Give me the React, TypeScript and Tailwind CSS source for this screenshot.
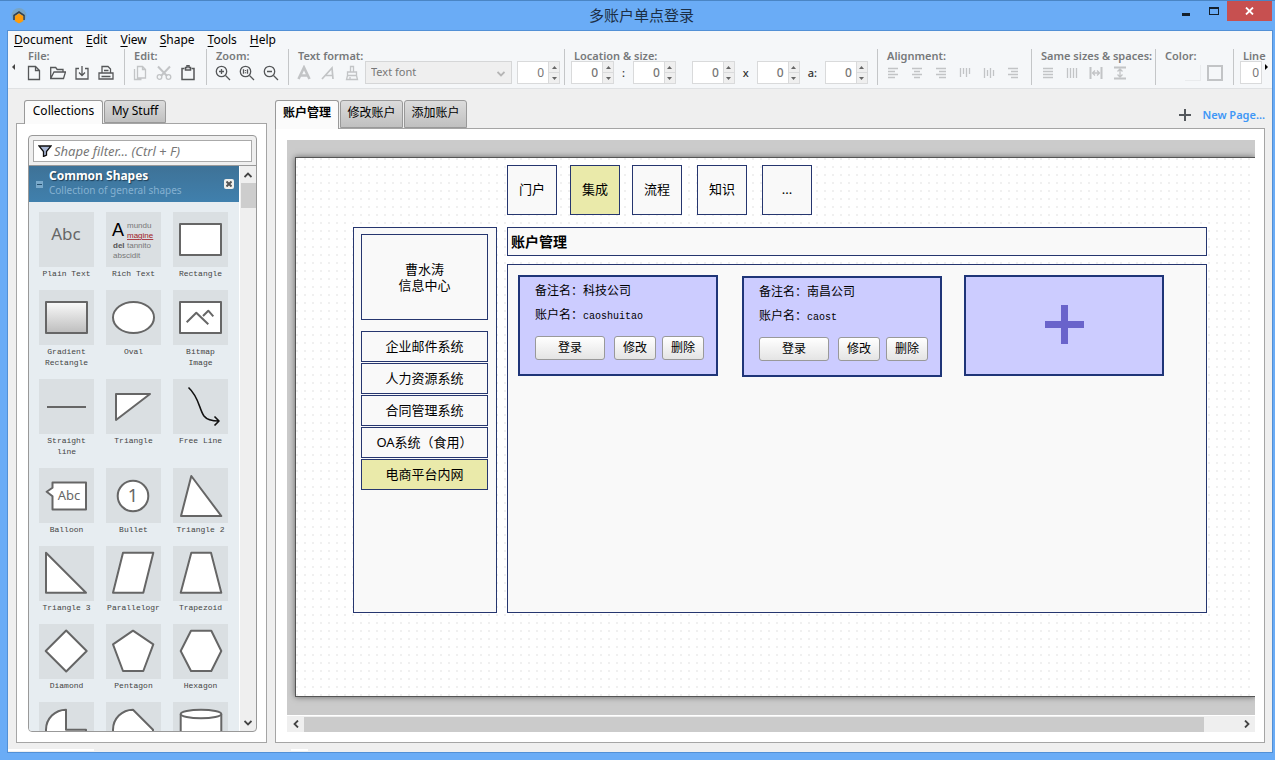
import type { ReactNode } from "react";
import clsx from "clsx";

const menus = ["Document", "Edit", "View", "Shape", "Tools", "Help"];

const pages = ["账户管理", "修改账户", "添加账户"];

const systems = ["企业邮件系统", "人力资源系统", "合同管理系统", "OA系统（食用）", "电商平台内网"];

const Icon = ({ children, size = 16 }: { children: ReactNode; size?: number }) => (
  <svg
    width={size}
    height={size}
    viewBox={`0 0 ${size} ${size}`}
    fill="none"
    stroke="currentColor"
    strokeWidth="1.3"
    aria-hidden="true"
  >
    {children}
  </svg>
);

const ToolButton = ({ label, off, children }: { label: string; off?: boolean; children: ReactNode }) => (
  <button
    type="button"
    aria-label={label}
    className={clsx("flex h-6 w-6 items-center justify-center", off ? "text-[#c2c4c6]" : "text-[#555759]")}
  >
    <Icon>{children}</Icon>
  </button>
);

const Group = ({ title, className, children }: { title: string; className: string; children: ReactNode }) => (
  <section className={clsx("h-9 shrink-0 border-l border-[#c4c6c8]", className)}>
    <h2 className="h-3 pl-[9px] text-[11px] leading-[14px] font-semibold whitespace-nowrap text-[#77797b]">
      {title}
    </h2>
    <div className="flex h-[23px] items-center">{children}</div>
  </section>
);

const Spin = ({ label }: { label: string }) => (
  <div className="flex h-[23px] shrink-0 border border-[#d9dadb] bg-white">
    <input
      type="text"
      aria-label={label}
      defaultValue="0"
      className="w-[30px] bg-transparent pr-1 text-right text-[12px] text-[#777] outline-none"
    />
    <div className="flex w-[11px] flex-col border-l border-[#d9dadb] bg-[#efefef] text-[#666]">
      <button type="button" aria-label={`${label} up`} className="flex flex-1 items-center justify-center border-b border-[#d9dadb]">
        <svg width="5" height="3" viewBox="0 0 5 3" fill="currentColor"><path d="M2.5 0 5 3H0z" /></svg>
      </button>
      <button type="button" aria-label={`${label} down`} className="flex flex-1 items-center justify-center">
        <svg width="5" height="3" viewBox="0 0 5 3" fill="currentColor"><path d="M0 0h5L2.5 3z" /></svg>
      </button>
    </div>
  </div>
);

const TitleBar = () => (
  <header className="flex h-[30px] shrink-0 items-start pl-[3px]">
    <div className="flex w-[100px] pt-[7px]">
      <svg width="16" height="16" viewBox="0 0 16 16" aria-hidden="true">
        <circle cx="8" cy="7.5" r="7.5" fill="#78a5c6" />
        <path d="M3 12V7.5L8 4l5 3.5V12" fill="none" stroke="#35424d" strokeWidth="1.6" />
        <path d="M8 5.5 12.2 8v5L8 15.5 4 13V8z" fill="#ff9c0a" />
      </svg>
    </div>
    <h1 className="flex-1 pt-[3px] text-center text-[15px] leading-[22px] text-[#1c2f45]">多账户单点登录</h1>
    <div className="flex w-[100px] items-start justify-end text-[#14202c]">
      <button type="button" aria-label="Minimize" className="flex h-5 w-[27px] items-center justify-center">
        <svg width="9" height="12" viewBox="0 0 9 12"><path d="M0 8h8v3H0z" fill="currentColor" /></svg>
      </button>
      <button type="button" aria-label="Maximize" className="flex h-5 w-[27px] items-center justify-center">
        <svg width="10" height="8" viewBox="0 0 10 8"><path d="M0 0h10v8H0zM1 2v5h8V2z" fill="currentColor" fillRule="evenodd" /></svg>
      </button>
      <button type="button" aria-label="Close" className="flex h-5 w-[45px] items-center justify-center bg-[#c75050] text-white">
        <svg width="9" height="8" viewBox="0 0 9 8" stroke="currentColor" strokeWidth="1.8"><path d="m1 .5 7 7M8 .5l-7 7" /></svg>
      </button>
    </div>
  </header>
);

const MenuBar = () => (
  <nav className="flex h-[17px] shrink-0 gap-[13px] bg-[#f5f7f9] pl-[6px] text-[12px] leading-[18px] text-black">
    {menus.map((name) => (
      <button key={name} type="button">
        <span className="underline underline-offset-2">{name[0]}</span>
        {name.slice(1)}
      </button>
    ))}
  </nav>
);

const ToolBar = () => (
  <div className="flex h-[41px] shrink-0 overflow-hidden border-b border-[#dfe1e3] bg-[#f5f7f9] pt-px">
    <div className="flex w-[10px] items-center justify-center pb-1 text-[#444]">
      <svg width="3" height="6" viewBox="0 0 3 6" fill="currentColor"><path d="M3 0v6L0 3z" /></svg>
    </div>
    <Group title="File:" className="w-[106px] border-transparent">
      <div className="flex pl-[3px]">
        <ToolButton label="New">
          <path d="M2.5 1.5h7l4 4v9h-11zM9.5 1.5v4h4" />
        </ToolButton>
        <ToolButton label="Open">
          <path d="M.7 13.5v-11h5l1.500 2H13v2.500M.7 13.500 4 7h11.500l-2 6.500z" />
        </ToolButton>
        <ToolButton label="Save">
          <path d="M5 3.500H2v10.500h12V3.500h-3M8 1v9M5 7.500 8 10.500l3-3" />
        </ToolButton>
        <ToolButton label="Print">
          <path d="M4 8V1.500h6l2.500 2.500v4M1 8h14v6H1zM3.500 11.500h9M6 5.500h4.500" />
        </ToolButton>
      </div>
    </Group>
    <Group title="Edit:" className="w-[82px]">
      <div className="flex pl-[3px]">
        <ToolButton label="Copy" off>
          <path d="M2.500 4v10.500h7M5.500 1.500h5l3 3v8.500h-8zM10.500 1.500v3h3" />
        </ToolButton>
        <ToolButton label="Cut" off>
          <path d="M2 1.500 11 11M14 1.500 5 11" strokeWidth="2" />
          <circle cx="3.500" cy="12" r="2.300" />
          <circle cx="12.500" cy="12" r="2.300" />
        </ToolButton>
        <ToolButton label="Paste">
          <path d="M4.500 3.500H2v11h12v-11h-2.500" strokeWidth="1.500" />
          <path d="M5.500 5V2.500h1.500V.8h2v1.700h1.500V5z" strokeWidth="1.500" />
        </ToolButton>
      </div>
    </Group>
    <Group title="Zoom:" className="w-[82px]">
      <div className="flex pl-1">
        <ToolButton label="Zoom in">
          <circle cx="6.500" cy="6.500" r="5.200" />
          <path d="m10.500 10.500 4.500 4.500M4 6.500h5M6.500 4v5" />
        </ToolButton>
        <ToolButton label="Actual size">
          <circle cx="6.500" cy="6.500" r="5.200" />
          <path d="m10.500 10.500 4.500 4.500M4.500 4.200v4.600M8.500 4.200v4.600M6.500 5v1M6.500 7.200v1" />
        </ToolButton>
        <ToolButton label="Zoom out">
          <circle cx="6.500" cy="6.500" r="5.200" />
          <path d="m10.500 10.500 4.500 4.500M4 6.500h5" />
        </ToolButton>
      </div>
    </Group>
    <Group title="Text format:" className="w-[276px]">
      <div className="flex pl-[3px]">
        <ToolButton label="Bold" off>
          <path d="M2.500 14 8 2.500 13.500 14M4.500 10.500h7" strokeWidth="2.600" />
        </ToolButton>
        <ToolButton label="Italic" off>
          <path d="M2 14 12 3l1 11M5.500 10.500h7" strokeWidth="1.700" />
        </ToolButton>
        <ToolButton label="Format brush" off>
          <path d="M6.500 7V1.500h3V7M3.500 7h9v3.500h-9zM3.500 10.500l-1 4h11l-1-4M6 12v2" />
        </ToolButton>
      </div>
      <div className="relative ml-px">
        <select
          aria-label="Text font"
          className="block h-[23px] w-[147px] appearance-none border border-[#d5d6d7] bg-[#efefef] pl-[5px] text-[11px] text-[#777] outline-none"
        >
          <option>Text font</option>
        </select>
        <svg className="pointer-events-none absolute top-[10px] right-[7px] text-[#b5b5b5]" width="8" height="6" viewBox="0 0 8 6" fill="none" stroke="currentColor" strokeWidth="1.800">
          <path d="m.5 1 3.500 3.500L7.500 1" />
        </svg>
      </div>
      <div className="ml-[5px] flex"><Spin label="Font size" /></div>
    </Group>
    <Group title="Location &amp; size:" className="w-[313px]">
      <div className="flex w-full items-center justify-between pr-[9px] pl-[6px] text-[11px] leading-none font-medium text-[#333]">
        <Spin label="X" />
        <span>:</span>
        <Spin label="Y" />
        <span />
        <Spin label="Width" />
        <span>x</span>
        <Spin label="Height" />
        <span>a:</span>
        <Spin label="Angle" />
      </div>
    </Group>
    <Group title="Alignment:" className="w-[154px]">
      <div className="flex pl-[3px]">
        <ToolButton label="Align left" off><path d="M3 3.500h10M3 6.500h7M3 9.500h10M3 12.500h7" /></ToolButton>
        <ToolButton label="Align center" off><path d="M3 3.500h10M5 6.500h6M3 9.500h10M5 12.500h6" /></ToolButton>
        <ToolButton label="Align right" off><path d="M3 3.500h10M6 6.500h7M3 9.500h10M6 12.500h7" /></ToolButton>
        <ToolButton label="Align top" off><path d="M3.500 3v9M6.500 3v6M9.500 3v9M12.500 3v6" /></ToolButton>
        <ToolButton label="Align middle" off><path d="M3.500 3v10M6.500 5v6M9.500 3v10M12.500 5v6" /></ToolButton>
        <ToolButton label="Align bottom" off><path d="M3 3.500h10M6 6.500h7M3 9.500h10M6 12.500h7" /></ToolButton>
      </div>
    </Group>
    <Group title="Same sizes &amp; spaces:" className="w-[124px]">
      <div className="flex pl-1">
        <ToolButton label="Same width" off><path d="M3 3.500h10M3 6.500h10M3 9.500h10M3 12.500h10" /></ToolButton>
        <ToolButton label="Same height" off><path d="M3.500 3v10M6.500 3v10M9.500 3v10M12.500 3v10" /></ToolButton>
        <ToolButton label="Same horizontal space" off>
          <path d="M2.500 2v12M13.500 2v12" strokeWidth="2" />
          <path d="M4.500 8h7M7 5.500 4.500 8 7 10.500M9 5.500 11.500 8 9 10.500" />
        </ToolButton>
        <ToolButton label="Same vertical space" off>
          <path d="M2 2.500h12M2 13.500h12" strokeWidth="2" />
          <path d="M8 4.500v7M5.500 6.500 8 4l2.500 2.500M5.500 9.500 8 12l2.500-2.500" />
        </ToolButton>
      </div>
    </Group>
    <Group title="Color:" className="w-[78px]">
      <button type="button" aria-label="Fill color" className="ml-[29px] h-4 w-4 border-r border-b border-[#e9ebed]" />
      <button type="button" aria-label="Line color" className="ml-[6px] h-4 w-4 border-2 border-[#c2c4c6]" />
    </Group>
    <Group title="Line" className="w-[31px]">
      <input
        type="text"
        aria-label="Line width"
        defaultValue="0"
        className="ml-[6px] h-[23px] w-[22px] shrink-0 border border-[#d9dadb] bg-white pr-[2px] text-right text-[12px] text-[#777] outline-none"
      />
    </Group>
    <div className="flex items-center pb-1 pl-px text-black">
      <svg width="3" height="6" viewBox="0 0 3 6" fill="currentColor"><path d="M0 0v6l3-3z" /></svg>
    </div>
  </div>
);

type Shape = { name: string; art: ReactNode };

const shapes: Shape[] = [
  {
    name: "Plain Text",
    art: <text x="27" y="28" textAnchor="middle" fontSize="17" fill="#666" stroke="none">Abc</text>,
  },
  {
    name: "Rich Text",
    art: (
      <g className="font-['Liberation_Sans',sans-serif]" fontSize="8" fill="#777" stroke="none">
        <text x="6" y="24" fontSize="18" fill="#000">A</text>
        <text x="21" y="16">mundu</text>
        <text x="21" y="26" fill="#a01822" textDecoration="underline">magine</text>
        <text x="7" y="36" fontWeight="700" fill="#555">del</text>
        <text x="21" y="36">tannito</text>
        <text x="7" y="46">abscidit</text>
      </g>
    ),
  },
  { name: "Rectangle", art: <rect x="7" y="12" width="41" height="31" /> },
  {
    name: "Gradient Rectangle",
    art: (
      <>
        <linearGradient id="fade" x2="0" y2="1">
          <stop stopColor="#fafafa" />
          <stop offset="1" stopColor="#bdbdbd" />
        </linearGradient>
        <rect x="7" y="12" width="41" height="31" fill="url(#fade)" />
      </>
    ),
  },
  { name: "Oval", art: <ellipse cx="27.500" cy="27.500" rx="20.500" ry="15.500" /> },
  {
    name: "Bitmap Image",
    art: (
      <>
        <rect x="7" y="12" width="41" height="31" />
        <path d="m13.700 32.300 9.600-9.600 12 11.600M30 26l5.300-5.300 5 5.600" fill="none" />
      </>
    ),
  },
  { name: "Straight line", art: <path d="M8 28h39" /> },
  { name: "Triangle", art: <path d="M10 15h34L10 41z" /> },
  {
    name: "Free Line",
    art: (
      <path
        d="M15.500 8.500C26 18 26 30 31 37c3 4 8 5 15 5M41.500 37.500 46 42l-4.500 4.500"
        fill="none"
        stroke="#111"
        strokeWidth="1.600"
      />
    ),
  },
  {
    name: "Balloon",
    art: (
      <>
        <path d="M13.500 14.500H47v27H13.500V28.300L7.700 23.700l5.800-4z" />
        <text x="30" y="32" textAnchor="middle" fontSize="13" fill="#666" stroke="none">Abc</text>
      </>
    ),
  },
  {
    name: "Bullet",
    art: (
      <>
        <circle cx="27" cy="28" r="15.300" />
        <text x="27" y="34" textAnchor="middle" fontSize="18" fill="#666" stroke="none">1</text>
      </>
    ),
  },
  { name: "Triangle 2", art: <path d="m18.300 8 30 40H8z" /> },
  { name: "Triangle 3", art: <path d="m7 6.700 40 40H7z" /> },
  { name: "Parallelogr", art: <path d="M17 6.700h30.300l-10 40H7z" /> },
  { name: "Trapezoid", art: <path d="M18.300 6.700H38l10.300 40H7.700z" /> },
  { name: "Diamond", art: <path d="m27.200 6.500 20.500 20.500-20.500 20.500L6.700 27z" /> },
  { name: "Pentagon", art: <path d="m27 6.700 20.300 13.600L37.300 47H17L7 20.300z" /> },
  { name: "Hexagon", art: <path d="M18 6.700h20.300L48.300 27l-10 20H18L7.700 27z" /> },
  { name: "", art: <path d="M27 7.700v20h20a20 20 0 1 1-20-20z" /> },
  { name: "", art: <path d="M27 7.700a20 20 0 1 0 20 20z" /> },
  {
    name: "",
    art: (
      <>
        <path d="M7.700 12v34h40.600V12" />
        <ellipse cx="28" cy="12" rx="20.300" ry="4.300" />
      </>
    ),
  },
];

const ShapeTile = ({ name, art }: Shape) => (
  <li>
    <svg
      className="block bg-[#dadfe2]"
      width="55"
      height="55"
      viewBox="0 0 55 55"
      fill="#fff"
      stroke="#666"
      strokeWidth="2"
      strokeLinejoin="round"
    >
      {art}
    </svg>
    <p className="mt-px overflow-hidden text-center font-['Liberation_Mono',monospace] text-[8px] leading-[11px] text-[#444]">
      {name}
    </p>
  </li>
);

const Tab = ({ active, className, children }: { active?: boolean; className?: string; children: ReactNode }) => (
  <button
    type="button"
    className={clsx(
      "rounded-t-[3px] border border-[#999]",
      active ? "border-b-0 bg-[#fbfbfb]" : "bg-linear-to-b from-[#dcdcdc] to-[#c0c0c0]",
      className,
    )}
  >
    {children}
  </button>
);

const Library = () => (
  <aside className="flex w-[251px] shrink-0 flex-col">
    <div className="z-10 -mb-px flex h-6 gap-px pl-2 text-[12px] leading-5 text-black">
      <Tab active className="w-[79px] pb-[3px]">Collections</Tab>
      <Tab className="mb-px w-[62px] pb-[2px]">My Stuff</Tab>
    </div>
    <div className="flex min-h-0 flex-1 flex-col border border-[#a5a5a5] bg-white p-[11px] pr-[9px] pb-[10px]">
      <div className="flex min-h-0 flex-1 flex-col overflow-hidden rounded-[4px] border border-[#999] bg-[#efefef]">
        <div className="border-b border-[#999] p-1 pb-[3px]">
          <label className="flex h-[22px] items-center border border-[#aaa] bg-white pl-1">
            <svg width="14" height="12" viewBox="0 0 14 12" aria-hidden="true">
              <path d="M1 1h12L8.500 6.500v3.500l-3 1.500v-5z" fill="#a8b6d4" stroke="#111" strokeWidth="1.300" />
            </svg>
            <input
              type="text"
              aria-label="Shape filter"
              placeholder="Shape filter... (Ctrl + F)"
              className="ml-[2px] h-5 min-w-0 flex-1 pb-px text-[13px] italic outline-none placeholder:text-[#777]"
            />
          </label>
        </div>
        <div className="flex min-h-0 flex-1">
          <div className="flex min-w-0 flex-1 flex-col overflow-hidden bg-[#e7edf1]">
            <div className="flex h-9 shrink-0 items-center bg-linear-to-b from-[#3e7297] to-[#4080ad] pr-[5px] pl-[7px]">
              <button type="button" aria-label="Collapse" className="flex h-[7px] w-[7px] items-center justify-center bg-[#79a9cb]">
                <span className="h-px w-[5px] bg-[#24506f]" />
              </button>
              <div className="ml-[6px] min-w-0 flex-1 pb-[3px]">
                <h2 className="text-[12px] leading-[15px] font-bold text-white text-shadow-[1px_1px_1px_#1e3d55]">Common Shapes</h2>
                <p className="text-[10px] leading-[15px] whitespace-nowrap text-[#85b1d1]">Collection of general shapes</p>
              </div>
              <button type="button" aria-label="Close collection" className="flex h-[10px] w-[10px] items-center justify-center rounded-xs bg-[#f0efec] text-[#555]">
                <svg width="6" height="6" viewBox="0 0 6 6" stroke="currentColor" strokeWidth="2"><path d="m.5.500 5 5M5.500.500l-5 5" /></svg>
              </button>
            </div>
            <ul className="grid grid-cols-[repeat(3,55px)] gap-x-3 gap-y-[11px] pt-[10px] pl-[10px]">
              {shapes.map((shape, index) => (
                <ShapeTile key={index} {...shape} />
              ))}
            </ul>
          </div>
          <div className="flex w-[17px] flex-col items-center border-l border-white text-[#444]">
            <button type="button" aria-label="Scroll up" className="flex h-[17px] w-full items-center justify-center">
              <svg width="8" height="6" viewBox="0 0 8 6" fill="none" stroke="currentColor" strokeWidth="1.800"><path d="M.5 5 4 1.500 7.500 5" /></svg>
            </button>
            <div className="h-[25px] w-[15px] bg-[#cdcdcd]" />
            <button type="button" aria-label="Scroll down" className="mt-auto flex h-[17px] w-full items-center justify-center">
              <svg width="8" height="6" viewBox="0 0 8 6" fill="none" stroke="currentColor" strokeWidth="1.800"><path d="M.5 1 4 4.500 7.500 1" /></svg>
            </button>
          </div>
        </div>
      </div>
    </div>
  </aside>
);

const CardButton = ({ className, children }: { className: string; children: ReactNode }) => (
  <button
    type="button"
    className={clsx("h-6 rounded-[3px] border border-[#999] bg-linear-to-b from-white to-[#e4e4e4] text-[12px] leading-5", className)}
  >
    {children}
  </button>
);

const AccountCard = ({ remark, account, className }: { remark: string; account: string; className: string }) => (
  <article
    className={clsx("absolute h-[101px] w-[200px] border-2 border-[#1f3578] bg-[#ccccff] pt-[2px] pl-[15px] text-[12px] leading-6", className)}
  >
    <p className="h-6">备注名：{remark}</p>
    <p className="h-6">
      账户名：<span className="font-['Liberation_Mono',monospace] text-[10px]">{account}</span>
    </p>
    <div className="mt-[9px] flex">
      <CardButton className="w-[70px]">登录</CardButton>
      <CardButton className="ml-[9px] w-[42px]">修改</CardButton>
      <CardButton className="ml-[6px] w-[42px]">删除</CardButton>
    </div>
  </article>
);

const box = "absolute border border-[#26366f] bg-[#f9f9f9]";

const Canvas = () => (
  <div className="relative flex-1 border border-r-0 border-[#555] bg-white bg-[radial-gradient(circle_at_1px_1px,#f0f0f0_1px,transparent_0)] bg-size-[8px_8px] text-[13px] text-black shadow-[0_0_6px_rgba(0,0,0,0.5)]">
    <div className={clsx(box, "top-[7px] left-[211px] flex size-[50px] items-center justify-center")}>门户</div>
    <div className="absolute top-[7px] left-[274px] flex size-[50px] items-center justify-center border border-[#26366f] bg-[#eaeaaa]">集成</div>
    <div className={clsx(box, "top-[7px] left-[336px] flex size-[50px] items-center justify-center")}>流程</div>
    <div className={clsx(box, "top-[7px] left-[401px] flex size-[50px] items-center justify-center")}>知识</div>
    <div className={clsx(box, "top-[7px] left-[466px] flex size-[50px] items-center justify-center")}>...</div>

    <div className={clsx(box, "top-[69px] left-[57px] h-[386px] w-[144px] pt-[6px] pr-2 pl-[7px]")}>
      <div className="flex h-[86px] flex-col items-center justify-center border border-[#26366f] leading-4">
        <p>曹水涛</p>
        <p>信息中心</p>
      </div>
      <ul className="mt-[11px] flex flex-col gap-px">
        {systems.map((name) => (
          <li
            key={name}
            className={clsx(
              "flex h-[31px] items-center justify-center border border-[#26366f]",
              name === "电商平台内网" && "bg-[#eaeaaa]",
            )}
          >
            {name}
          </li>
        ))}
      </ul>
    </div>

    <h2 className={clsx(box, "top-[69px] left-[211px] h-[29px] w-[700px] pl-[3px] text-[14px] leading-[27px] font-bold")}>账户管理</h2>
    <div className={clsx(box, "top-[106px] left-[211px] h-[349px] w-[700px]")}>
      <AccountCard remark="科技公司" account="caoshuitao" className="top-[10px] left-[10px]" />
      <AccountCard remark="南昌公司" account="caost" className="top-[11px] left-[234px]" />
      <button type="button" aria-label="Add account" className="absolute top-[10px] left-[456px] flex h-[101px] w-[200px] items-center justify-center border-2 border-[#1f3578] bg-[#ccccff] pb-[2px]">
        <svg width="39" height="39" viewBox="0 0 39 39" fill="#6963cb"><path d="M16 0h7v16h16v7H23v16h-7V23H0v-7h16z" /></svg>
      </button>
    </div>
  </div>
);

const Workspace = () => (
  <main className="flex min-w-0 flex-1 flex-col">
    <div className="z-10 -mb-px flex h-[29px] gap-px text-[12px] leading-6 text-black">
      {pages.map((page, index) => (
        <Tab
          key={page}
          active={index === 0}
          className={index === 0 ? "w-16 pb-1 font-bold" : "mb-px w-[63px] pb-[2px]"}
        >
          {page}
        </Tab>
      ))}
      <button type="button" className="ml-auto flex items-center text-[11px] font-semibold text-[#3f97f6]">
        <svg className="mr-[11px]" width="12" height="12" viewBox="0 0 12 12" stroke="#54585c" strokeWidth="2"><path d="M6 0v12M0 6h12" /></svg>
        <span>New Page...</span>
      </button>
    </div>
    <div className="flex min-h-0 flex-1 flex-col border border-[#a5a5a5] bg-white pt-[11px] pr-[9px] pb-[10px] pl-[11px]">
      <div className="flex min-h-0 flex-1 overflow-hidden bg-[#cbcbcb] pt-[17px] pb-[18px] pl-2">
        <Canvas />
      </div>
      <div className="mt-px flex h-4 items-center bg-[#efefef] text-[#444]">
        <button type="button" aria-label="Scroll left" className="flex h-full w-[17px] items-center justify-center">
          <svg width="6" height="8" viewBox="0 0 6 8" fill="none" stroke="currentColor" strokeWidth="1.800"><path d="M5 .5 1.500 4 5 7.500" /></svg>
        </button>
        <div className="mr-4 flex h-[15px] flex-1"><div className="w-[98%] bg-[#cbcbcb]" /></div>
        <button type="button" aria-label="Scroll right" className="flex h-full w-[17px] items-center justify-center">
          <svg width="6" height="8" viewBox="0 0 6 8" fill="none" stroke="currentColor" strokeWidth="1.800"><path d="M1 .5 4.500 4 1 7.500" /></svg>
        </button>
      </div>
    </div>
  </main>
);

const App = () => {
  return (
    <div className="flex h-screen flex-col border-t border-[#4a85c4] bg-[#6aacf6] pr-[3px] pb-2 pl-2 font-['Noto_Sans','Noto_Sans_CJK_SC',sans-serif]">
      <TitleBar />
      <div className="flex min-h-0 flex-1 flex-col bg-[#efefef] outline outline-[#5290d6]">
        <MenuBar />
        <ToolBar />
        <div className="flex min-h-0 flex-1 gap-2 pt-[11px] pr-[7px] pl-2">
          <Library />
          <Workspace />
        </div>
        <div className="mt-[6px] mb-px flex h-[2px]">
          <div className="w-[86px] bg-white" />
          <div className="ml-[197px] w-[17px] bg-white" />
        </div>
      </div>
    </div>
  );
};

export default App;
